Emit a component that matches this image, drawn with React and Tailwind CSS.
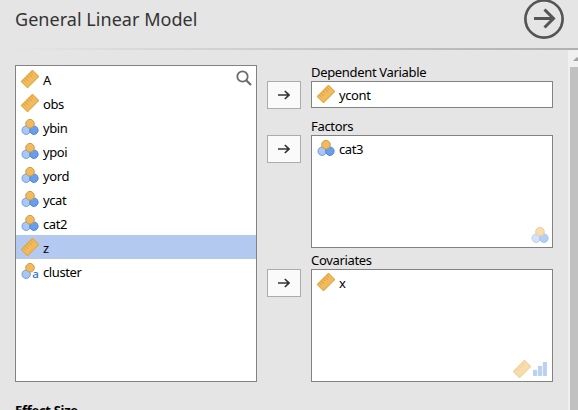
import React from "react";

function Ruler({ className = "" }) {
  return (
    <svg viewBox="0 0 18 18" className={`h-[18px] w-[18px] shrink-0 ${className}`}>
      <g transform="rotate(-45 9 9)">
        <rect x="1.1" y="4.6" width="15.8" height="8.8" rx="0.5" fill="#f0bb5e" stroke="#e5a53f" strokeWidth="1" />
        <path d="M3.7 5v2.6M6.3 5v3.6M9 5v2.6M11.7 5v3.6M14.3 5v2.6" stroke="#d99325" strokeWidth="0.8" fill="none" />
      </g>
    </svg>
  );
}

function Nominal({ className = "" }) {
  return (
    <svg viewBox="0 0 18 18" className={`h-[18px] w-[18px] shrink-0 ${className}`}>
      <circle cx="5.2" cy="12.2" r="4.2" fill="#a9c7f5" stroke="#6f9de0" />
      <circle cx="12.9" cy="12.2" r="4.2" fill="#6b9eea" stroke="#4a86e0" />
      <circle cx="9" cy="5.7" r="4.3" fill="#f0bb60" stroke="#d09a40" />
    </svg>
  );
}

function NominalText() {
  return (
    <svg viewBox="0 0 18 18" className="h-[18px] w-[18px] shrink-0 overflow-visible">
      <circle cx="5.2" cy="12.2" r="4.2" fill="#a9c7f5" stroke="#6f9de0" />
      <circle cx="9" cy="5.7" r="4.3" fill="#f0bb60" stroke="#d09a40" />
      <text x="11.2" y="16" fontSize="11.5" fontWeight="500" fill="#2d72d9" fontFamily="'Noto Sans', sans-serif">a</text>
    </svg>
  );
}

function Bars() {
  return (
    <svg viewBox="0 0 14 14" className="h-[14px] w-[14px]" fill="#bad0f3" stroke="#a9c5f1" strokeWidth="0.6">
      <path d="M.3 8.3h3.4v5.4H.3zM5.3 4.3h3.4v9.4H5.3zM10.3.3h3.4v13.4h-3.4z" />
    </svg>
  );
}

function MoveButton({ className = "" }) {
  return (
    <button className={`flex h-7 w-[34px] items-center justify-center border border-[#acacac] bg-[#fafafa] ${className}`}>
      <svg viewBox="0 0 12 12" className="h-3 w-3" fill="none" stroke="#333" strokeWidth="1.7">
        <path d="M0 6h11M6.8 2 11 6 6.8 10" />
      </svg>
    </button>
  );
}

const variables = [
  ["A", Ruler],
  ["obs", Ruler],
  ["ybin", Nominal],
  ["ypoi", Nominal],
  ["yord", Nominal],
  ["ycat", Nominal],
  ["cat2", Nominal],
  ["z", Ruler],
  ["cluster", NominalText],
];

function Row({ name, Icon, selected = false }) {
  return (
    <div className={`flex h-6 items-center gap-1 pl-[5px] ${selected ? "bg-[#b3c9ef]" : ""}`}>
      <Icon />
      <span className="pt-0.5 leading-none tracking-[-0.4px]">{name}</span>
    </div>
  );
}

function Label({ children, className = "" }) {
  return <div className={`h-4 whitespace-nowrap leading-[15px] tracking-[-0.33px] ${className}`}>{children}</div>;
}

export default function App() {
  return (
    <div className="flex h-[410px] w-[578px] flex-col overflow-hidden bg-[#e5e5e5] font-['Noto_Sans','Open_Sans',sans-serif] text-[13px] text-black">
      <header className="flex h-12 shrink-0 items-start justify-between pl-[15px] pr-[14px]">
        <h1 className="mt-[7px] text-[18px] leading-6 tracking-[0.04px] text-[#333]">General Linear Model</h1>
        <svg viewBox="0 0 40 40" className="-mt-px h-10 w-10" fill="none" stroke="#555">
          <circle cx="20" cy="20" r="18.6" strokeWidth="2.7" />
          <path d="M10 19.5h19.5M20.5 10.5l9 9-9 9" strokeWidth="3" />
        </svg>
      </header>
      <div className="h-0.5 shrink-0 bg-linear-to-r from-[#e5e5e5] from-2% to-[#b0b0b0]" />
      <div className="flex min-h-0 flex-1">
        <main className="w-[568px] shrink-0 pl-[15px] pt-[15px]">
          <div className="flex">
            <section className="flex h-[317px] w-[242px] items-start border border-[#828282] bg-white pt-px">
              <div className="w-full">
                {variables.map(([name, Icon]) => (
                  <Row key={name} name={name} Icon={Icon} selected={name === "z"} />
                ))}
              </div>
              <svg viewBox="0 0 16 16" className="-ml-5 mr-1 mt-[3px] h-4 w-4 shrink-0" fill="none" stroke="#6b6b6b">
                <circle cx="6.5" cy="6.5" r="5.2" strokeWidth="1.8" />
                <path d="m10.2 10.2 4.8 4.8" strokeWidth="2.2" />
              </svg>
            </section>
            <div className="ml-[10px] flex w-[34px] flex-col pt-4">
              <MoveButton />
              <MoveButton className="mt-[26px]" />
              <MoveButton className="mt-[106px]" />
            </div>
            <div className="ml-[10px] w-[242px]">
              <Label>Dependent Variable</Label>
              <div className="h-[27px] border border-[#828282] bg-white">
                <Row name="ycont" Icon={Ruler} />
              </div>
              <Label className="mt-[11px]">Factors</Label>
              <div className="flex h-[113px] flex-col justify-between border border-[#828282] bg-white">
                <Row name="cat3" Icon={Nominal} />
                <div className="flex justify-end pb-[3px] pr-[3px]">
                  <Nominal className="opacity-50" />
                </div>
              </div>
              <Label className="mt-[5px]">Covariates</Label>
              <div className="flex h-[113px] flex-col justify-between border border-[#828282] bg-white">
                <Row name="x" Icon={Ruler} />
                <div className="flex items-center justify-end gap-[2px] pb-[3px] pr-[5px]">
                  <Ruler className="opacity-50" />
                  <Bars />
                </div>
              </div>
            </div>
          </div>
          <h2 className="mt-5 whitespace-nowrap font-bold leading-4 tracking-[-0.3px]">Effect Size</h2>
        </main>
        <div className="flex w-[10px] shrink-0 flex-col overflow-hidden bg-[#f0f0f0] pl-0.5">
          <svg viewBox="0 0 8 17" className="h-[17px] w-2 shrink-0" fill="#a3a3a3">
            <path d="M3 11 7 7l4 4z" />
          </svg>
          <div className="flex-1 bg-[#c1c1c1]" />
        </div>
      </div>
    </div>
  );
}
